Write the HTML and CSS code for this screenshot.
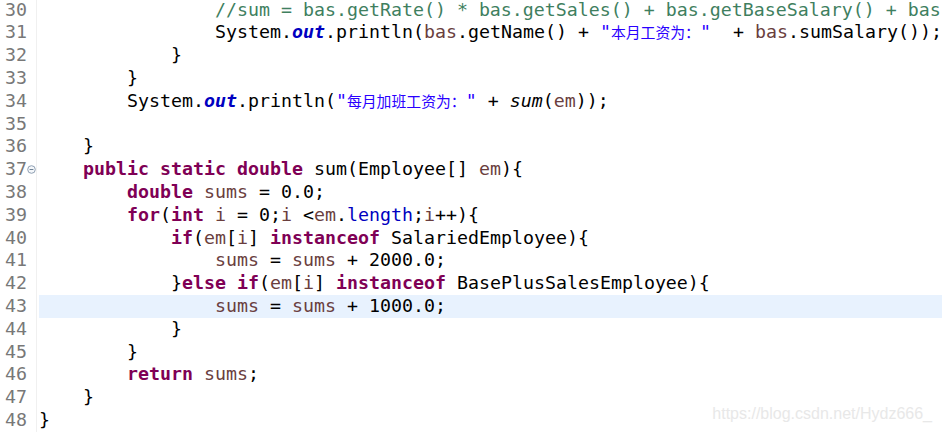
FILE: index.html
```html
<!DOCTYPE html>
<html lang="en">
<head>
    <meta charset="UTF-8">
    <title>Employee.java</title>
    <link rel="stylesheet" href="styles.css">
</head>
<body>
    <div class="editor">
        <div class="line"><span class="num">30</span><span class="fold"></span><span class="src">                <span class="cm">//sum = bas.getRate() * bas.getSales() + bas.getBaseSalary() + bas</span></span></div>
        <div class="line"><span class="num">31</span><span class="fold"></span><span class="src">                System.<span class="sfld">out</span>.println(<span class="var">bas</span>.getName() + <span class="str">"<span class="cjk">本月工资为：</span>"</span>  + <span class="var">bas</span>.sumSalary());</span></div>
        <div class="line"><span class="num">32</span><span class="fold"></span><span class="src">            }</span></div>
        <div class="line"><span class="num">33</span><span class="fold"></span><span class="src">        }</span></div>
        <div class="line"><span class="num">34</span><span class="fold"></span><span class="src">        System.<span class="sfld">out</span>.println(<span class="str">"<span class="cjk">每月加班工资为：</span>"</span> + <span class="smeth">sum</span>(<span class="var">em</span>));</span></div>
        <div class="line"><span class="num">35</span><span class="fold"></span><span class="src"></span></div>
        <div class="line"><span class="num">36</span><span class="fold"></span><span class="src">    }</span></div>
        <div class="line"><span class="num">37</span><span class="fold">
            <svg width="9" height="9" viewBox="0 0 9 9"><circle cx="4.5" cy="4.5" r="3.8" fill="#f4f7fa" stroke="#8e9fb2" stroke-width="1"/><line x1="2.6" y1="4.5" x2="6.4" y2="4.5" stroke="#6f8296" stroke-width="1"/></svg>
        </span><span class="src">    <span class="kw">public</span> <span class="kw">static</span> <span class="kw">double</span> sum(Employee[] <span class="var">em</span>){</span></div>
        <div class="line"><span class="num">38</span><span class="fold"></span><span class="src">        <span class="kw">double</span> <span class="var">sums</span> = 0.0;</span></div>
        <div class="line"><span class="num">39</span><span class="fold"></span><span class="src">        <span class="kw">for</span>(<span class="kw">int</span> <span class="var">i</span> = 0;<span class="var">i</span> &lt;<span class="var">em</span>.<span class="fld">length</span>;<span class="var">i</span>++){</span></div>
        <div class="line"><span class="num">40</span><span class="fold"></span><span class="src">            <span class="kw">if</span>(<span class="var">em</span>[<span class="var">i</span>] <span class="kw">instanceof</span> SalariedEmployee){</span></div>
        <div class="line"><span class="num">41</span><span class="fold"></span><span class="src">                <span class="var">sums</span> = <span class="var">sums</span> + 2000.0;</span></div>
        <div class="line"><span class="num">42</span><span class="fold"></span><span class="src">            }<span class="kw">else</span> <span class="kw">if</span>(<span class="var">em</span>[<span class="var">i</span>] <span class="kw">instanceof</span> BasePlusSalesEmployee){</span></div>
        <div class="line current"><span class="num">43</span><span class="fold"></span><span class="src">                <span class="var">sums</span> = <span class="var">sums</span> + 1000.0;</span></div>
        <div class="line"><span class="num">44</span><span class="fold"></span><span class="src">            }</span></div>
        <div class="line"><span class="num">45</span><span class="fold"></span><span class="src">        }</span></div>
        <div class="line"><span class="num">46</span><span class="fold"></span><span class="src">        <span class="kw">return</span> <span class="var">sums</span>;</span></div>
        <div class="line"><span class="num">47</span><span class="fold"></span><span class="src">    }</span></div>
        <div class="line"><span class="num">48</span><span class="fold"></span><span class="src">}</span></div>
    </div>

    <div class="watermark">https://blog.csdn.net/Hydz666_</div>
</body>
</html>
```

FILE: styles.css
```css
/* Editor page */
body {
    margin: 0;
    background: #ffffff;
    overflow: hidden;
    height: 434px;
    position: relative;
}

.editor {
    margin-top: -1.4px;
    font-family: 'DejaVu Sans Mono', 'Liberation Mono', monospace;
    font-size: 18.27px;
    color: #000000;
}

.line {
    display: flex;
    height: 22.8px;
    line-height: 22.8px;
}

/* Gutter */
.num {
    width: 27px;
    flex: none;
    text-align: right;
    color: #787878;
}

.fold {
    width: 9px;
    flex: none;
    display: flex;
    align-items: center;
    justify-content: center;
    border-right: 1px solid #f0f0f0;
}

.fold svg {
    display: block;
}

/* Source text */
.src {
    flex: 1;
    margin-left: 2px;
    white-space: pre;
    overflow: hidden;
}

.current .src {
    background: #e8f2fe;
}

/* Syntax colours (Eclipse) */
.kw {
    color: #7f0055;
    font-weight: bold;
}

.cm {
    color: #3f7f5f;
}

.str {
    color: #2a00ff;
}

.cjk {
    font-family: 'Noto Sans CJK SC', sans-serif;
    font-size: 14.85px;
}

.var {
    color: #6a3e3e;
}

.fld {
    color: #0000c0;
}

.sfld {
    color: #0000c0;
    font-weight: bold;
    font-style: italic;
}

.smeth {
    font-style: italic;
}

/* CSDN watermark over the code */
.watermark {
    position: absolute;
    top: 405px;
    right: 10px;
    font-family: 'Liberation Sans', Arial, sans-serif;
    font-size: 16px;
    line-height: 18px;
    color: #e8e8e8;
}
```
